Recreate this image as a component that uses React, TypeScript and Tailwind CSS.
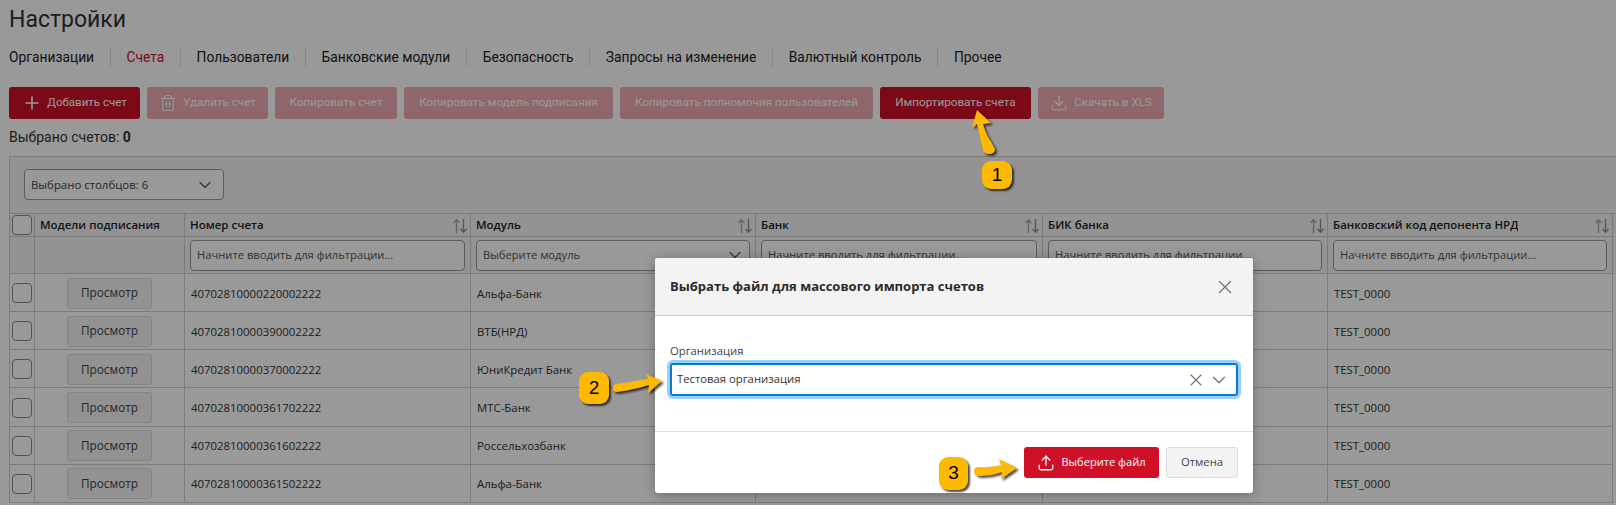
import { ChevronDown, Download, Plus, Trash2, Upload, X } from "lucide-react";

const TABS = [
  "Организации",
  "Счета",
  "Пользователи",
  "Банковские модули",
  "Безопасность",
  "Запросы на изменение",
  "Валютный контроль",
  "Прочее",
];

const ROWS = [
  { account: "40702810000220002222", module: "Альфа-Банк" },
  { account: "40702810000390002222", module: "ВТБ(НРД)" },
  { account: "40702810000370002222", module: "ЮниКредит Банк" },
  { account: "40702810000361702222", module: "МТС-Банк" },
  { account: "40702810000361602222", module: "Россельхозбанк" },
  { account: "40702810000361502222", module: "Альфа-Банк" },
];

const GRID = "grid grid-cols-[25px_150px_286px_285px_287px_285px_285px]";
const CELL = "border-r border-b border-[#cfcfcf] flex items-center min-w-0";
const FILTER_HINT = "Начните вводить для фильтрации...";

function SortIcon() {
  return (
    <svg className="absolute right-[2px] top-[4px]" width="16" height="16" viewBox="0 0 16 16" fill="none" strokeWidth="1.4">
      <path d="M4.5 15V2M1.5 5l3-3.2 3 3.2" stroke="#a9a9a9" />
      <path d="M11.5 1v13M8.5 11l3 3.2 3-3.2" stroke="#8f8f8f" />
    </svg>
  );
}

function Checkbox() {
  return <span className="block size-[20px] rounded-[4px] border border-[#8a8a8a] bg-white" />;
}

function HeaderCell({ label, sortable = true }: { label: string; sortable?: boolean }) {
  return (
    <div className={`${CELL} relative pl-[5px] text-[11.5px] font-semibold text-[#222]`}>
      <span className="truncate">{label}</span>
      {sortable && <SortIcon />}
    </div>
  );
}

function FilterCell({ placeholder = FILTER_HINT, select = false }: { placeholder?: string; select?: boolean }) {
  return (
    <div className={`${CELL} px-[5px]`}>
      <div className="flex h-[31px] w-full items-center justify-between rounded-[4px] border border-[#9a9a9a] bg-white pl-[6px] pr-[4px] text-[11.2px] text-[#555]">
        <span className="truncate">{placeholder}</span>
        {select && <ChevronDown size={20} strokeWidth={1.4} className="shrink-0 text-[#555]" />}
      </div>
    </div>
  );
}

function Toolbar() {
  const disabled = "flex h-[32px] items-center justify-center rounded-[3px] bg-[#eeaab2] text-[11.7px] text-white";
  const active = "flex h-[32px] items-center justify-center rounded-[3px] bg-[#cf1027] text-[11.7px] text-white";
  return (
    <div className="mt-[20px] flex gap-[7px]">
      <button className={`${active} w-[131px] gap-[5px]`}>
        <Plus size={20} strokeWidth={2} />
        <span className="text-[11.5px]">Добавить счет</span>
      </button>
      <button className={`${disabled} w-[121px] gap-[6px]`}>
        <Trash2 size={18} strokeWidth={1.5} />
        Удалить счет
      </button>
      <button className={`${disabled} w-[122px]`}>Копировать счет</button>
      <button className={`${disabled} w-[209px]`}>Копировать модель подписания</button>
      <button className={`${disabled} w-[253px]`}>Копировать полномочия пользователей</button>
      <button className={`${active} w-[151px]`}>Импортировать счета</button>
      <button className={`${disabled} w-[126px] gap-[6px]`}>
        <Download size={18} strokeWidth={1.5} />
        Скачать в XLS
      </button>
    </div>
  );
}

function AccountsTable() {
  return (
    <div className="mt-[10px] border-t border-l border-[#cfcfcf] bg-[#f6f6f6] pt-[12px] font-['Open_Sans',sans-serif]">
      <div className="mb-[13px] ml-[14px] flex h-[31px] w-[200px] items-center justify-between rounded-[4px] border border-[#9a9a9a] bg-white pl-[6px] pr-[8px] text-[11.4px] text-[#444]">
        Выбрано столбцов: 6
        <ChevronDown size={20} strokeWidth={1.4} className="text-[#555]" />
      </div>
      <div className={`${GRID} h-[24px] border-t border-[#cfcfcf]`}>
        <div className={`${CELL} justify-center`}>
          <Checkbox />
        </div>
        <HeaderCell label="Модели подписания" sortable={false} />
        <HeaderCell label="Номер счета" />
        <HeaderCell label="Модуль" />
        <HeaderCell label="Банк" />
        <HeaderCell label="БИК банка" />
        <HeaderCell label="Банковский код депонента НРД" />
      </div>
      <div className={`${GRID} h-[37px]`}>
        <div className={CELL} />
        <div className={CELL} />
        <FilterCell />
        <FilterCell placeholder="Выберите модуль" select />
        <FilterCell />
        <FilterCell />
        <FilterCell />
      </div>
      {ROWS.map((row) => (
        <div key={row.account} className={`${GRID} h-[38.17px] bg-white text-[11.4px] text-[#333]`}>
          <div className={`${CELL} justify-center pt-px`}>
            <Checkbox />
          </div>
          <div className={`${CELL} justify-center pt-px`}>
            <button className="h-[31px] w-[85px] rounded-[3px] border border-[#dcdcdc] bg-[#f3f3f3] text-[11.8px] text-[#444]">
              Просмотр
            </button>
          </div>
          <div className={`${CELL} pl-[6px] pt-px`}>{row.account}</div>
          <div className={`${CELL} pl-[6px] pt-px`}>{row.module}</div>
          <div className={CELL} />
          <div className={CELL} />
          <div className={`${CELL} pl-[6px] pt-px`}>TEST_0000</div>
        </div>
      ))}
    </div>
  );
}

function ImportDialog() {
  return (
    <div className="absolute left-[655px] top-[258px] flex h-[235px] w-[598px] flex-col overflow-hidden rounded-[3px] bg-white font-['Open_Sans',sans-serif] shadow-[0_2px_12px_rgba(0,0,0,0.3)]">
      <div className="flex h-[58px] shrink-0 items-center justify-between border-b border-[#c9c9c9] bg-[#f3f3f3] pl-[15px] pr-[17px]">
        <span className="text-[13px] font-bold text-[#2a2a2a]">Выбрать файл для массового импорта счетов</span>
        <X size={22} strokeWidth={1.5} className="text-[#777]" />
      </div>
      <div className="h-[116px] shrink-0 border-b border-[#dedede] px-[15px] pt-[26px]">
        <div className="text-[11.3px] leading-[18px] text-[#444]">Организация</div>
        <div className="mt-[3px] flex h-[33px] items-center justify-between rounded-[3px] border-2 border-[#0a78cf] pl-[5px] pr-[6px] text-[11.3px] text-[#333] ring-[3px] ring-[#98d0fb]">
          Тестовая организация
          <span className="flex items-center gap-[2px] text-[#777]">
            <X size={20} strokeWidth={1.5} />
            <ChevronDown size={22} strokeWidth={1.5} />
          </span>
        </div>
      </div>
      <div className="flex justify-end gap-[7px] pr-[15px] pt-[15px]">
        <button className="flex h-[31px] w-[135px] items-center justify-center gap-[6px] rounded-[3px] bg-[#cf1027] text-[11.1px] font-medium text-white">
          <Upload size={18} strokeWidth={1.7} />
          Выберите файл
        </button>
        <button className="h-[31px] w-[72px] rounded-[3px] border border-[#dcdcdc] bg-[#f3f3f3] text-[11.3px] text-[#444]">
          Отмена
        </button>
      </div>
    </div>
  );
}

function StepBadge({ n, className }: { n: number; className: string }) {
  return (
    <div
      className={`absolute flex items-center justify-center rounded-[9px] bg-[#ffb900] font-['Liberation_Sans',sans-serif] text-[19px] text-black shadow-[2px_2px_2px_rgba(0,0,0,0.7)] ${className}`}
    >
      {n}
    </div>
  );
}

// Callouts drawn on top of the screenshot
function Annotations() {
  return (
    <>
      <svg className="absolute left-0 top-0 drop-shadow-[2px_2px_1px_rgba(0,0,0,0.7)]" width="1616" height="505" fill="#ffb900">
        <path d="M977 110L991 123L983 124C986 135 992 143 995 149Q995 154 989 154Q984 154 983 150L977 124L972 128Z" />
        <path d="M662 381L648 393L649 385C640 388 625 391 617 392Q613 392 613 388Q613 384 617 384L648 379L646 374Z" />
        <path d="M1017 468L1001 479L1002 472C995 475 985 476 979 476Q974 475 974 471Q974 467 979 467C987 468 995 466 1001 465L999 459Z" />
      </svg>
      <StepBadge n={1} className="left-[982px] top-[161px] h-[28px] w-[30px]" />
      <StepBadge n={2} className="left-[579px] top-[372px] h-[32px] w-[30px]" />
      <StepBadge n={3} className="left-[939px] top-[457px] h-[33px] w-[29px]" />
    </>
  );
}

export default function App() {
  return (
    <div className="relative h-[505px] w-[1616px] overflow-hidden bg-white">
      <div className="pl-[9px] font-['Roboto',sans-serif]">
        <h1 className="pt-[6px] text-[23px] leading-[28px] text-[#333]">Настройки</h1>
        <div className="mt-[13px] flex h-[20px] items-center text-[13.8px] text-[#222]">
          {TABS.map((tab, i) => (
            <span
              key={tab}
              className={`flex h-[20px] items-center border-r border-[#e3e3e3] pr-[15.7px] last:border-r-0 ${i === 0 ? "" : "pl-[15.7px]"} ${tab === "Счета" ? "text-[#cf1027]" : ""}`}
            >
              {tab}
            </span>
          ))}
        </div>
        <Toolbar />
        <div className="mt-[9px] text-[14px] leading-[18px] text-[#333]">
          Выбрано счетов: <b>0</b>
        </div>
        <AccountsTable />
      </div>
      <div className="absolute inset-0 bg-black/40" />
      <ImportDialog />
      <Annotations />
    </div>
  );
}
